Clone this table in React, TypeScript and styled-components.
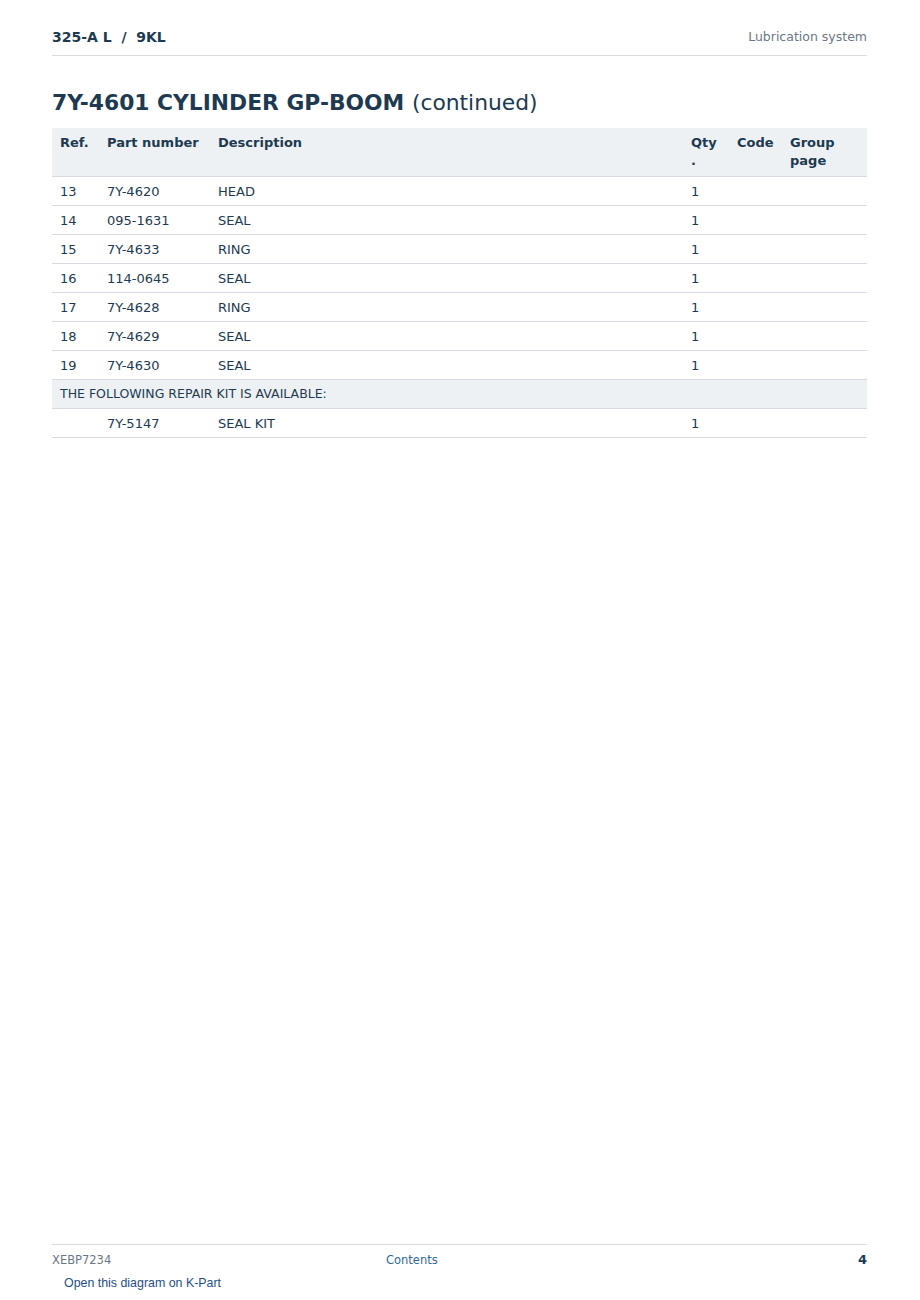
import React from "react";
import styled, { createGlobalStyle } from "styled-components";

const Global = createGlobalStyle`
  html, body { margin: 0; padding: 0; background: #fff; }
  body { font-family: "DejaVu Sans", "Liberation Sans", sans-serif; color: #1d3a52; }
`;

const Page = styled.div`
  box-sizing: border-box;
  min-height: 1300px;
  padding: 0 53px 0 52px;
  display: flex;
  flex-direction: column;
`;

const Header = styled.header`
  display: flex;
  justify-content: space-between;
  align-items: center;
  padding: 28px 0 9px;
  border-bottom: 1px solid #d9dde2;
  line-height: 18px;
`;

const Crumb = styled.div`
  font-size: 14px;
  font-weight: bold;
  color: #1d3a52;
  white-space: pre;
`;

const Section = styled.div`
  font-size: 12.5px;
  color: #6b7785;
`;

const Title = styled.h1`
  margin: 33px 0 11px;
  font-size: 21.8px;
  line-height: 28px;
  font-weight: bold;
  color: #1d3a52;
  span { font-weight: normal; }
`;

const Table = styled.table`
  width: 100%;
  border-collapse: collapse;
  table-layout: fixed;
  font-size: 13px;
  line-height: 18px;
`;

const Th = styled.th<{ $w: number }>`
  box-sizing: border-box;
  width: ${(p) => p.$w}px;
  text-align: left;
  vertical-align: top;
  padding: 6px 8px;
  background: #edf1f4;
  font-weight: bold;
  color: #1d3a52;
  border-bottom: 1px solid #d5dbe1;
  overflow-wrap: anywhere;
`;

const Td = styled.td`
  padding: 6px 8px 4px;
  border-bottom: 1px solid #d5dbe1;
  color: #1d3a52;
  vertical-align: top;
`;

const NoteCell = styled.td`
  padding: 5px 8px;
  background: #edf1f4;
  border-bottom: 1px solid #d5dbe1;
  font-size: 12.5px;
  color: #1d3a52;
`;

const Footer = styled.footer`
  margin-top: auto;
  border-top: 1px solid #d9dde2;
  padding-top: 8px;
  padding-bottom: 10px;
`;

const FooterRow = styled.div`
  display: grid;
  grid-template-columns: 334px 1fr auto;
  align-items: center;
  font-size: 11.5px;
  line-height: 14px;
`;

const DocId = styled.div`
  color: #6b7785;
`;

const Contents = styled.a`
  color: #2e6a9a;
  text-decoration: none;
  justify-self: start;
`;

const PageNo = styled.div`
  justify-self: end;
  font-weight: bold;
  font-size: 13px;
  color: #1d3a52;
`;

const KPart = styled.a`
  display: block;
  margin: 9px 0 0 12px;
  font-family: "Liberation Sans", Arial, sans-serif;
  font-size: 12.4px;
  line-height: 14px;
  color: #1f4f8a;
  text-decoration: none;
`;

const rows = [
  ["13", "7Y-4620", "HEAD", "1"],
  ["14", "095-1631", "SEAL", "1"],
  ["15", "7Y-4633", "RING", "1"],
  ["16", "114-0645", "SEAL", "1"],
  ["17", "7Y-4628", "RING", "1"],
  ["18", "7Y-4629", "SEAL", "1"],
  ["19", "7Y-4630", "SEAL", "1"],
];

export default function App() {
  return (
    <>
      <Global />
      <Page>
        <Header>
          <Crumb>{"325-A L  /  9KL"}</Crumb>
          <Section>Lubrication system</Section>
        </Header>
        <Title>
          7Y-4601 CYLINDER GP-BOOM <span>(continued)</span>
        </Title>
        <Table>
          <thead>
            <tr>
              <Th $w={47}>Ref.</Th>
              <Th $w={111}>Part number</Th>
              <Th $w={473}>Description</Th>
              <Th $w={46}>
                Qty
                <br />.
              </Th>
              <Th $w={53}>Code</Th>
              <Th $w={85}>Group page</Th>
            </tr>
          </thead>
          <tbody>
            {rows.map((r) => (
              <tr key={r[0]}>
                <Td>{r[0]}</Td>
                <Td>{r[1]}</Td>
                <Td>{r[2]}</Td>
                <Td>{r[3]}</Td>
                <Td />
                <Td />
              </tr>
            ))}
            <tr>
              <NoteCell colSpan={6}>THE FOLLOWING REPAIR KIT IS AVAILABLE:</NoteCell>
            </tr>
            <tr>
              <Td />
              <Td>7Y-5147</Td>
              <Td>SEAL KIT</Td>
              <Td>1</Td>
              <Td />
              <Td />
            </tr>
          </tbody>
        </Table>
        <Footer>
          <FooterRow>
            <DocId>XEBP7234</DocId>
            <Contents href="#">Contents</Contents>
            <PageNo>4</PageNo>
          </FooterRow>
          <KPart href="#">Open this diagram on K-Part</KPart>
        </Footer>
      </Page>
    </>
  );
}
